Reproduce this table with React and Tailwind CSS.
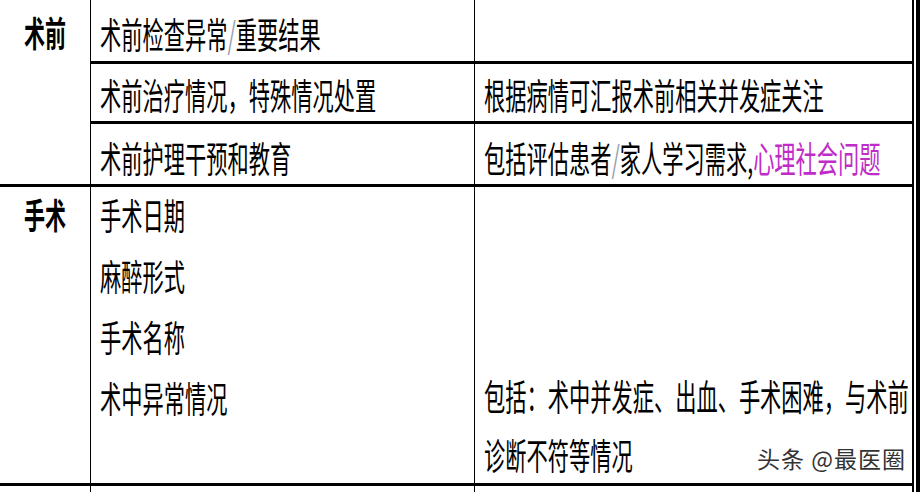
import React from "react";

const cjk = { fontFamily: '"Noto Sans CJK SC", "Noto Sans", sans-serif' };

function T({ children }) {
  return (
    <span className="inline-block origin-left scale-x-[0.59] whitespace-nowrap text-[36px] leading-none font-normal text-black">
      {children}
    </span>
  );
}

export default function App() {
  return (
    <div className="w-[920px] h-[492px] bg-white flex overflow-hidden" style={cjk}>
      <div className="w-[912px] min-w-0 flex flex-col">
        {/* Section 1: 术前 */}
        <div className="flex border-b-[3px] border-black">
          <div className="w-[91px] shrink-0 border-r border-black flex justify-center pt-[14px]">
            <span className="inline-block scale-x-[0.6] whitespace-nowrap text-[35px] leading-none font-bold text-black">术前</span>
          </div>
          <div className="flex-1 min-w-0 flex flex-col">
            <div className="h-[64px] flex border-b-[3px] border-black">
              <div className="w-[384px] shrink-0 border-r border-black pl-[9px] flex items-center pt-[5px]">
                <T>
                  术前检查异常<span className="text-gray-400">/</span>重要结果
                </T>
              </div>
              <div className="flex-1 min-w-0" />
            </div>
            <div className="h-[60px] flex border-b-[3px] border-black">
              <div className="w-[384px] shrink-0 border-r border-black pl-[9px] flex items-center pt-[3px]">
                <T>术前治疗情况，特殊情况处置</T>
              </div>
              <div className="flex-1 min-w-0 pl-[9px] flex items-center pt-[3px]">
                <T>根据病情可汇报术前相关并发症关注</T>
              </div>
            </div>
            <div className="h-[60px] flex">
              <div className="w-[384px] shrink-0 border-r border-black pl-[9px] flex items-center pt-[5px]">
                <T>术前护理干预和教育</T>
              </div>
              <div className="flex-1 min-w-0 pl-[9px] flex items-center pt-[5px]">
                <T>
                  包括评估患者<span className="text-gray-400">/</span>家人学习需求,
                  <span className="text-[#c02cc8]">心理社会问题</span>
                </T>
              </div>
            </div>
          </div>
        </div>

        {/* Section 2: 手术 */}
        <div className="h-[299px] flex border-b-[3px] border-black">
          <div className="w-[91px] shrink-0 border-r border-black flex justify-center pt-[9px]">
            <span className="inline-block scale-x-[0.6] whitespace-nowrap text-[35px] leading-none font-bold text-black">手术</span>
          </div>
          <div className="w-[384px] shrink-0 border-r border-black pl-[9px] pt-[7px] flex flex-col gap-[21px]">
            <div className="h-[40px] flex items-center"><T>手术日期</T></div>
            <div className="h-[40px] flex items-center"><T>麻醉形式</T></div>
            <div className="h-[40px] flex items-center"><T>手术名称</T></div>
            <div className="h-[40px] flex items-center"><T>术中异常情况</T></div>
          </div>
          <div className="flex-1 min-w-0 relative pl-[9px] pt-[188px] flex flex-col gap-[19px]">
            <div className="h-[40px] flex items-center"><T>包括：术中并发症、出血、手术困难，与术前</T></div>
            <div className="h-[40px] flex items-center"><T>诊断不符等情况</T></div>
            <div className="absolute top-[260px] right-[6px] whitespace-nowrap text-[23px] leading-none text-[#333] tracking-[1px] [text-shadow:0_0_2px_#fff]">
              头条 @最医圈
            </div>
          </div>
        </div>

        {/* Bottom stub */}
        <div className="flex-1 flex">
          <div className="w-[91px] shrink-0 border-r border-black" />
          <div className="w-[384px] shrink-0 border-r border-black" />
          <div className="flex-1 min-w-0" />
        </div>
      </div>
      <div className="w-[2px] shrink-0 bg-black" />
      <div className="w-[2px] shrink-0 bg-white" />
      <div className="w-[4px] shrink-0 bg-black" />
    </div>
  );
}
